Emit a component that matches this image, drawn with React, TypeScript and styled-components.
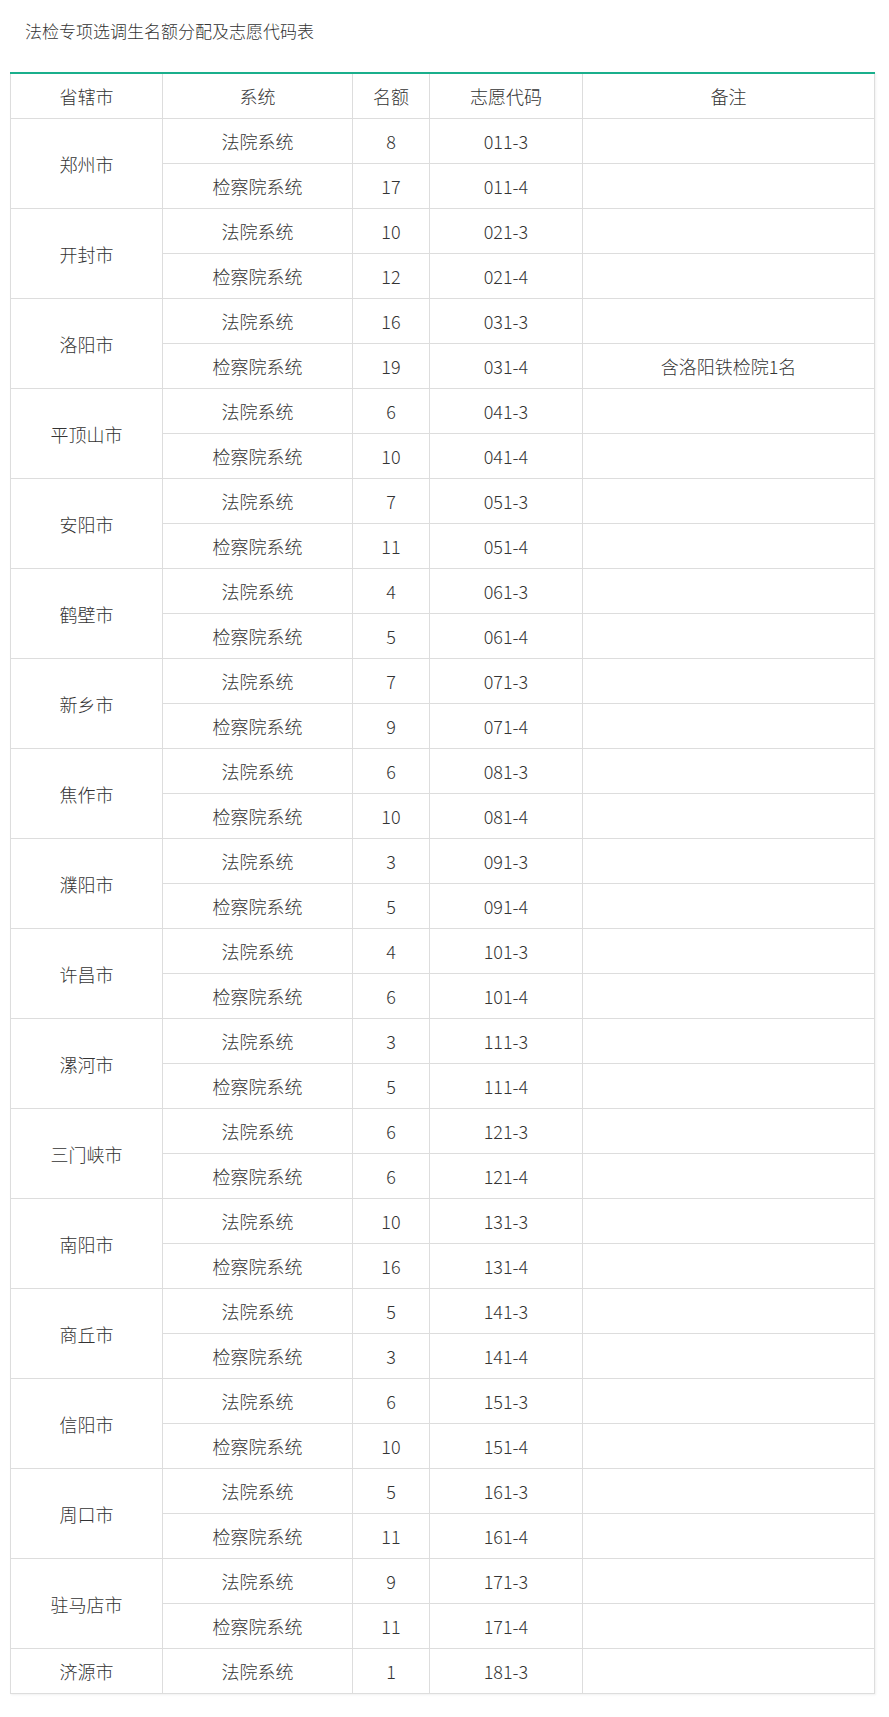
import React from "react";
import styled, { createGlobalStyle } from "styled-components";

const GlobalStyle = createGlobalStyle`
  html, body {
    margin: 0;
    padding: 0;
    background: #ffffff;
  }
  body {
    font-family: "Noto Sans CJK SC", "Noto Sans", sans-serif;
    color: #333333;
  }
`;

const Page = styled.div`
  padding: 16px 15px 20px 10px;
  width: 864px;
`;

const Title = styled.h1`
  margin: 0 0 27px 15px;
  font-size: 17px;
  font-weight: 300;
  line-height: 29px;
  color: #333333;
`;

const Table = styled.table`
  width: 864px;
  border-collapse: collapse;
  table-layout: fixed;
  border-top: 2px solid #1aaf8c;
  box-shadow: 1px 1px 2px rgba(0, 0, 0, 0.06);
`;

const HeadCell = styled.th`
  height: 44px;
  padding: 0;
  border: 1px solid #dddddd;
  border-top: none;
  font-size: 18px;
  font-weight: 300;
  color: #333333;
  text-align: center;
  vertical-align: middle;
`;

const Cell = styled.td`
  height: 44px;
  padding: 0;
  border: 1px solid #dddddd;
  font-size: 18px;
  font-weight: 300;
  color: #333333;
  text-align: center;
  vertical-align: middle;
`;

type Entry = { count: number; code: string; note?: string };
type City = { name: string; entries: Entry[] };

const cities: City[] = [
  { name: "郑州市", entries: [{ count: 8, code: "011-3" }, { count: 17, code: "011-4" }] },
  { name: "开封市", entries: [{ count: 10, code: "021-3" }, { count: 12, code: "021-4" }] },
  { name: "洛阳市", entries: [{ count: 16, code: "031-3" }, { count: 19, code: "031-4", note: "含洛阳铁检院1名" }] },
  { name: "平顶山市", entries: [{ count: 6, code: "041-3" }, { count: 10, code: "041-4" }] },
  { name: "安阳市", entries: [{ count: 7, code: "051-3" }, { count: 11, code: "051-4" }] },
  { name: "鹤壁市", entries: [{ count: 4, code: "061-3" }, { count: 5, code: "061-4" }] },
  { name: "新乡市", entries: [{ count: 7, code: "071-3" }, { count: 9, code: "071-4" }] },
  { name: "焦作市", entries: [{ count: 6, code: "081-3" }, { count: 10, code: "081-4" }] },
  { name: "濮阳市", entries: [{ count: 3, code: "091-3" }, { count: 5, code: "091-4" }] },
  { name: "许昌市", entries: [{ count: 4, code: "101-3" }, { count: 6, code: "101-4" }] },
  { name: "漯河市", entries: [{ count: 3, code: "111-3" }, { count: 5, code: "111-4" }] },
  { name: "三门峡市", entries: [{ count: 6, code: "121-3" }, { count: 6, code: "121-4" }] },
  { name: "南阳市", entries: [{ count: 10, code: "131-3" }, { count: 16, code: "131-4" }] },
  { name: "商丘市", entries: [{ count: 5, code: "141-3" }, { count: 3, code: "141-4" }] },
  { name: "信阳市", entries: [{ count: 6, code: "151-3" }, { count: 10, code: "151-4" }] },
  { name: "周口市", entries: [{ count: 5, code: "161-3" }, { count: 11, code: "161-4" }] },
  { name: "驻马店市", entries: [{ count: 9, code: "171-3" }, { count: 11, code: "171-4" }] },
  { name: "济源市", entries: [{ count: 1, code: "181-3" }] },
];

const systems = ["法院系统", "检察院系统"];

export default function App() {
  return (
    <>
      <GlobalStyle />
      <Page>
        <Title>法检专项选调生名额分配及志愿代码表</Title>
        <Table>
          <colgroup>
            <col style={{ width: 152 }} />
            <col style={{ width: 190 }} />
            <col style={{ width: 77 }} />
            <col style={{ width: 153 }} />
            <col style={{ width: 292 }} />
          </colgroup>
          <thead>
            <tr>
              <HeadCell>省辖市</HeadCell>
              <HeadCell>系统</HeadCell>
              <HeadCell>名额</HeadCell>
              <HeadCell>志愿代码</HeadCell>
              <HeadCell>备注</HeadCell>
            </tr>
          </thead>
          <tbody>
            {cities.map((city) =>
              city.entries.map((e, i) => (
                <tr key={city.name + e.code}>
                  {i === 0 && <Cell rowSpan={city.entries.length}>{city.name}</Cell>}
                  <Cell>{systems[i]}</Cell>
                  <Cell>{e.count}</Cell>
                  <Cell>{e.code}</Cell>
                  <Cell>{e.note ?? ""}</Cell>
                </tr>
              ))
            )}
          </tbody>
        </Table>
      </Page>
    </>
  );
}
